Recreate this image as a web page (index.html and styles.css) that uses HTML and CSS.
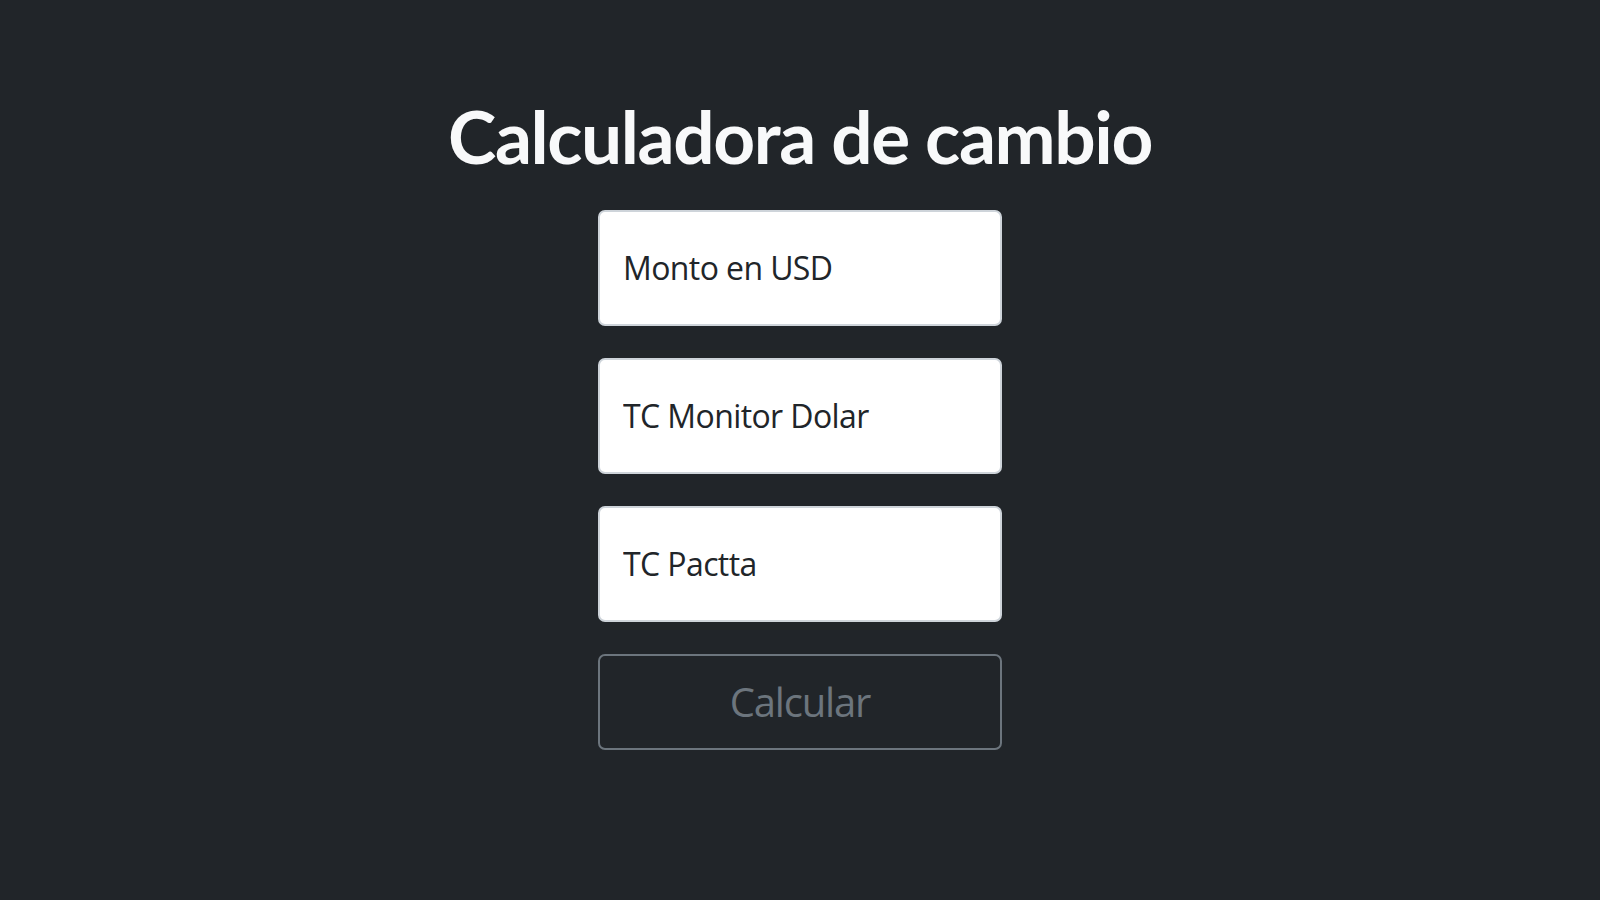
FILE: index.html
```html
<!DOCTYPE html>
<html lang="es">
<head>
<meta charset="utf-8">
<title>Calculadora de cambio</title>
<link rel="stylesheet" href="styles.css">
</head>
<body>
<main class="page">
  <h1 class="title">Calculadora de cambio</h1>
  <form class="calc-form">
    <input class="field" type="text" placeholder="Monto en USD">
    <input class="field" type="text" placeholder="TC Monitor Dolar">
    <input class="field" type="text" placeholder="TC Pactta">
    <button class="btn-calc" type="button">Calcular</button>
  </form>
</main>
</body>
</html>
```

FILE: styles.css
```css
* {
  box-sizing: border-box;
}

html, body {
  margin: 0;
  padding: 0;
  background: #212529;
  height: 100%;
}

body {
  font-family: "Open Sans", "Noto Sans", "Liberation Sans", sans-serif;
  color: #f8f9fa;
}

.page {
  display: flex;
  flex-direction: column;
  align-items: center;
  padding-top: 93px;
}

.title {
  margin: 0 0 29px 0;
  font-family: Lato, "Open Sans", sans-serif;
  font-size: 73px;
  line-height: 1.2;
  font-weight: 700;
  letter-spacing: -1.4px;
  color: #f8f9fa;
  text-align: center;
}

.calc-form {
  width: 404px;
  display: flex;
  flex-direction: column;
  gap: 32px;
}

.field {
  display: block;
  width: 100%;
  height: 116px;
  padding: 0 23px;
  font-family: inherit;
  font-size: 32px;
  letter-spacing: -0.6px;
  color: #212529;
  background: #ffffff;
  border: 2px solid #ced4da;
  border-radius: 7px;
  outline: none;
}

.field::placeholder {
  color: #212529;
  opacity: 1;
}

.btn-calc {
  display: block;
  width: 100%;
  height: 96px;
  font-family: inherit;
  font-size: 40px;
  letter-spacing: -1.2px;
  color: #6c757d;
  background: transparent;
  border: 2px solid #6c757d;
  border-radius: 7px;
  cursor: pointer;
}
```
